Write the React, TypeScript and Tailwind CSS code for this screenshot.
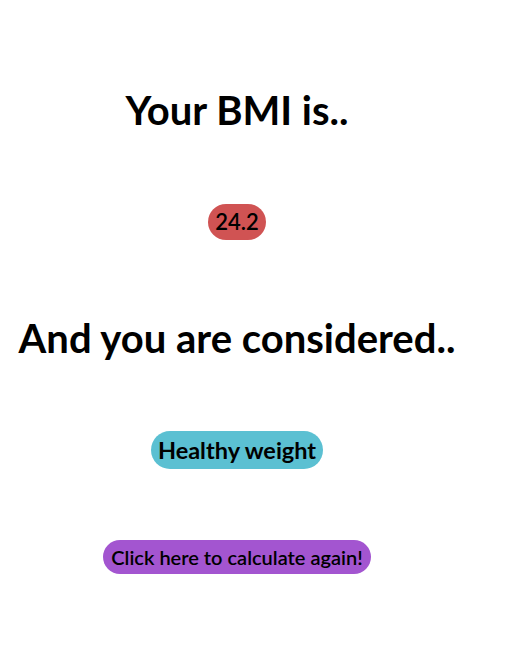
export default function App() {
  return (
    <div className="min-h-screen bg-white font-['Lato',sans-serif] text-black">
      <div className="flex w-[474px] flex-col items-center pt-[86px] text-center">
        <h1 className="text-[40px] font-bold leading-[48px]">Your BMI is..</h1>
        <span className="mt-[70px] rounded-full bg-[#d05353] px-[7px] text-[22px] font-semibold leading-[36px]">
          24.2
        </span>
        <h2 className="mt-[74px] text-[40px] font-bold leading-[48px]">And you are considered..</h2>
        <span className="mt-[69px] rounded-full bg-[#5bc0d2] px-[7px] text-[23.5px] font-bold leading-[38px]">
          Healthy weight
        </span>
        <button className="mt-[71px] rounded-full bg-[#a355d0] px-2 text-[20px] font-semibold leading-[34px]">
          Click here to calculate again!
        </button>
      </div>
    </div>
  )
}
